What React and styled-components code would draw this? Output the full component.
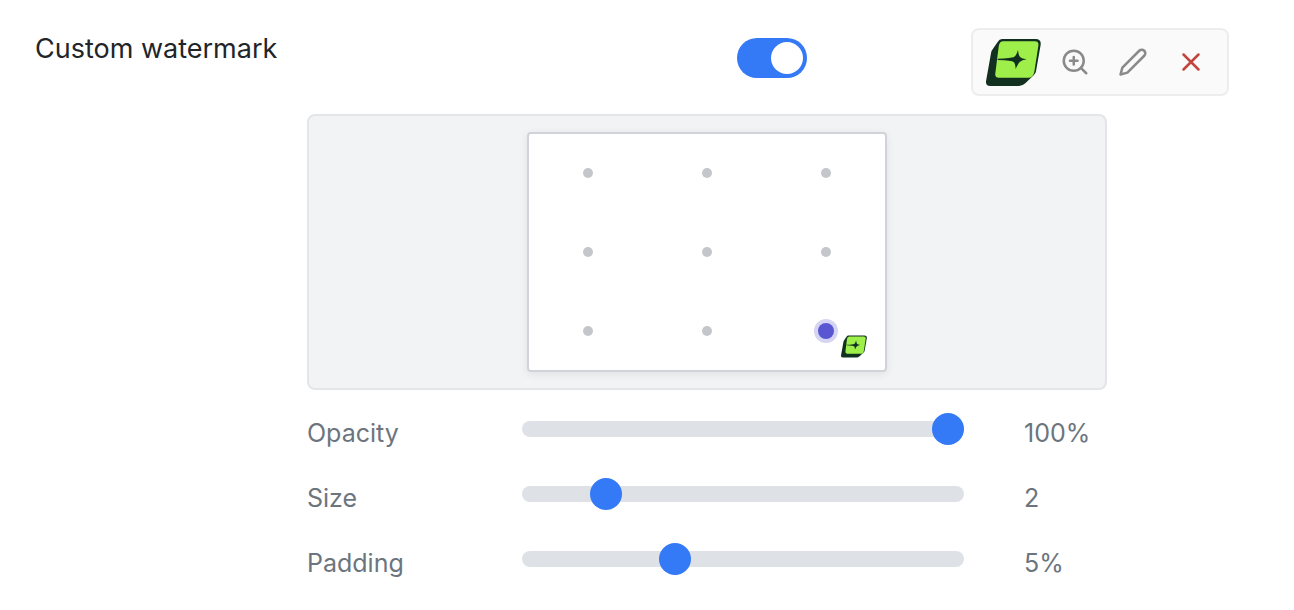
import React, { useState } from "react";
import styled, { createGlobalStyle } from "styled-components";

const GlobalStyle = createGlobalStyle`
  *, *::before, *::after { box-sizing: border-box; }
  body {
    margin: 0;
    background: #fff;
    color: #212529;
    font-family: Inter, "Liberation Sans", sans-serif;
  }
`;

const Page = styled.main`
  padding: 28px 65px 24px 35px;
`;

const Header = styled.header`
  display: flex;
  align-items: flex-start;
`;

const Title = styled.label`
  flex: 1;
  font-size: 27px;
  line-height: 42px;
`;

const Toggle = styled.input`
  appearance: none;
  display: flex;
  justify-content: flex-start;
  flex: none;
  width: 70px;
  height: 40px;
  margin: 10px 164px 0 0;
  padding: 4px;
  border-radius: 20px;
  background: #dee2e6;
  cursor: pointer;

  &::before {
    content: "";
    width: 32px;
    height: 32px;
    border-radius: 50%;
    background: #fff;
  }

  &:checked {
    justify-content: flex-end;
    background: #3479f6;
  }
`;

const Toolbar = styled.div`
  display: flex;
  align-items: center;
  flex: none;
  height: 68px;
  padding: 0 7px 0 13px;
  border: 2px solid #ededed;
  border-radius: 8px;
  background: #fafafa;
`;

const LogoSvg = styled.svg`
  display: block;
  flex: none;
  width: ${(p) => p.$width}px;
  height: ${(p) => p.$height}px;
`;

const LogoSlot = styled.span`
  padding-right: 5px;
`;

const IconButton = styled.button`
  display: flex;
  align-items: center;
  justify-content: center;
  width: 58px;
  height: 58px;
  padding: 0;
  border: 0;
  background: none;
  color: ${(p) => (p.$danger ? "#c1453d" : "#8a8a8a")};
  cursor: pointer;
`;

const Settings = styled.section`
  margin: 18px 122px 0 272px;
`;

const Stage = styled.div`
  display: flex;
  justify-content: center;
  padding: 16px;
  border: 2px solid #e4e5e9;
  border-radius: 8px;
  background: #f2f3f5;
`;

const Preview = styled.div`
  position: relative;
  display: grid;
  grid-template-columns: repeat(3, 1fr);
  grid-template-rows: repeat(3, 1fr);
  place-items: center;
  width: 360px;
  height: 240px;
  border: 2px solid #d1d3db;
  border-radius: 4px;
  background: #fff;
  box-shadow: 0 2px 8px rgba(0, 0, 0, 0.08);
`;

const Anchor = styled.input`
  appearance: none;
  width: 10px;
  height: 10px;
  margin: 0;
  border-radius: 50%;
  background: #c4c6cc;
  cursor: pointer;

  &:checked {
    width: 16px;
    height: 16px;
    background: #5856d0;
    box-shadow: 0 0 0 4px #d5d4f3;
  }
`;

const PlacedMark = styled.span`
  position: absolute;
  right: 18px;
  bottom: 12px;
`;

const Sliders = styled.div`
  display: grid;
  gap: 25px;
  margin-top: 23px;
`;

const SliderRow = styled.div`
  display: grid;
  grid-template-columns: 215px 1fr 83px;
  align-items: start;
  color: #6c757d;
  font-size: 25px;
  line-height: 40px;
`;

const Range = styled.input`
  appearance: none;
  width: calc(100% - 60px);
  height: 32px;
  margin: 0;
  background: transparent;
  cursor: pointer;

  &::-webkit-slider-runnable-track {
    height: 16px;
    border-radius: 8px;
    background: #dee2e6;
  }

  &::-webkit-slider-thumb {
    appearance: none;
    width: 32px;
    height: 32px;
    margin-top: -8px;
    border-radius: 50%;
    background: #3479f6;
  }
`;

function Logo({ width, height }) {
  return (
    <LogoSvg $width={width} $height={height} viewBox="12 15 165 141" aria-hidden="true">
      <path
        fill="#12301f"
        d="M60 15H161Q178 15 176 32L162 112Q161 119 155 124L130 148Q121 156 111 156H25Q11 156 12 142L27 58Q28 50 34 43L47 24Q52 15 60 15Z"
      />
      <path
        fill="#9fef4a"
        d="M64 22H158Q171 22 169 35L157 113Q154 131 138 131H51Q38 131 40 118L50 38Q52 22 64 22Z"
      />
      <path
        fill="#12301f"
        d="M108 48Q110 66 115 70Q120 74 134 76Q120 78 113 84Q107 90 101 105Q100 89 95 84Q90 80 47 78V74Q88 73 96 69Q103 65 108 48Z"
      />
    </LogoSvg>
  );
}

function LineIcon({ children }) {
  return (
    <svg
      width="30"
      height="30"
      viewBox="0 0 24 24"
      fill="none"
      stroke="currentColor"
      strokeWidth="2"
      strokeLinecap="round"
      strokeLinejoin="round"
      aria-hidden="true"
    >
      {children}
    </svg>
  );
}

const anchors = [
  "Top left", "Top center", "Top right",
  "Middle left", "Center", "Middle right",
  "Bottom left", "Bottom center", "Bottom right",
];

function Slider({ id, label, min, max, initial, unit = "" }) {
  const [value, setValue] = useState(initial);
  return (
    <SliderRow>
      <label htmlFor={id}>{label}</label>
      <Range
        id={id}
        type="range"
        min={min}
        max={max}
        value={value}
        onChange={(e) => setValue(e.target.value)}
      />
      <output htmlFor={id}>{value}{unit}</output>
    </SliderRow>
  );
}

export default function App() {
  const [enabled, setEnabled] = useState(true);
  const [anchor, setAnchor] = useState("Bottom right");

  return (
    <>
      <GlobalStyle />
      <Page>
        <Header>
          <Title htmlFor="watermark">Custom watermark</Title>
          <Toggle
            id="watermark"
            type="checkbox"
            role="switch"
            checked={enabled}
            onChange={(e) => setEnabled(e.target.checked)}
          />
          <Toolbar>
            <LogoSlot><Logo width={55} height={47} /></LogoSlot>
            <IconButton type="button" aria-label="Zoom in">
              <LineIcon>
                <circle cx="11" cy="11" r="8" />
                <path d="M21 21l-4.35-4.35M11 8v6M8 11h6" />
              </LineIcon>
            </IconButton>
            <IconButton type="button" aria-label="Edit">
              <LineIcon>
                <path d="M17 3a2.828 2.828 0 1 1 4 4L7.5 20.5 2 22l1.5-5.5L17 3z" />
              </LineIcon>
            </IconButton>
            <IconButton type="button" aria-label="Remove" $danger>
              <LineIcon>
                <path d="M18 6L6 18M6 6l12 12" />
              </LineIcon>
            </IconButton>
          </Toolbar>
        </Header>

        <Settings>
          <Stage>
            <Preview role="radiogroup" aria-label="Watermark position">
              {anchors.map((name) => (
                <Anchor
                  key={name}
                  type="radio"
                  name="anchor"
                  aria-label={name}
                  checked={anchor === name}
                  onChange={() => setAnchor(name)}
                />
              ))}
              <PlacedMark><Logo width={26} height={23} /></PlacedMark>
            </Preview>
          </Stage>
          <Sliders>
            <Slider id="opacity" label="Opacity" min={0} max={100} initial={100} unit="%" />
            <Slider id="size" label="Size" min={1} max={7} initial={2} />
            <Slider id="padding" label="Padding" min={0} max={15} initial={5} unit="%" />
          </Sliders>
        </Settings>
      </Page>
    </>
  );
}
